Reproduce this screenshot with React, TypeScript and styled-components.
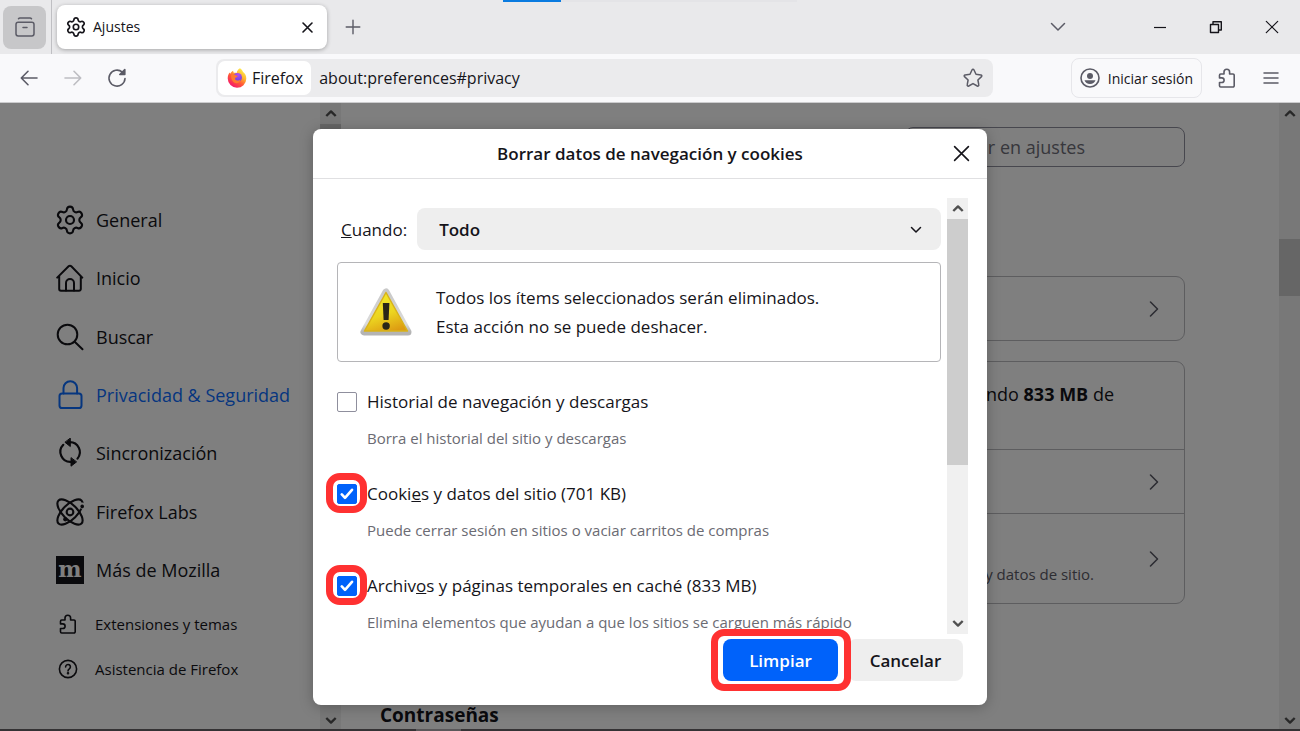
import React from "react";
import styled, { createGlobalStyle, css } from "styled-components";
import { Settings, Search } from "lucide-react";

const Global = createGlobalStyle`
  *, *::before, *::after { box-sizing: border-box; }
  body { margin: 0; font-family: "Open Sans", "Noto Sans", sans-serif; color: #15141a; }
  button, input, select { font: inherit; color: inherit; margin: 0; }
  button { border: 0; padding: 0; background: none; cursor: pointer; }
  a { color: inherit; text-decoration: none; }
  svg { display: block; flex: none; }
`;

const Window = styled.div`
  height: 100vh;
  display: flex;
  flex-direction: column;
  overflow: hidden;
  background: #fff;
`;

/* ---------- Tab strip ---------- */

const TabStrip = styled.header`
  position: relative;
  flex: none;
  height: 54px;
  display: flex;
  align-items: center;
  background: #e9e9eb;
  padding-left: 3px;
`;

const LoadingBar = styled.div`
  position: absolute;
  top: 0;
  left: 503px;
  width: 294px;
  height: 2px;
  background: linear-gradient(to right, #0a7be0 58px, #e4e4e7 58px);
`;

const ViewButton = styled.button`
  width: 43px;
  height: 43px;
  border-radius: 8px;
  background: #c7c7c9;
  color: #5b5b66;
  display: grid;
  place-items: center;
`;

const TabDivider = styled.span`
  width: 1px;
  align-self: stretch;
  margin: 0 5px;
  background: #bfbfc3;
`;

const Tab = styled.div`
  width: 270px;
  height: 44px;
  display: flex;
  align-items: center;
  gap: 7px;
  padding: 0 13px 0 9px;
  border-radius: 8px;
  background: #fff;
  box-shadow: 0 1px 4px rgba(0, 0, 0, 0.3);
  font-size: 14px;
  line-height: 20px;
`;

const TabTitle = styled.span`
  flex: 1;
`;

const IconButton = styled.button<{ $faded?: boolean }>`
  width: 44px;
  height: 44px;
  display: grid;
  place-items: center;
  flex: none;
  color: #5b5b66;
  ${(p) => p.$faded && css`color: #bdbdc2;`}
`;

const TabClose = styled.button`
  width: 14px;
  height: 20px;
  display: grid;
  place-items: center;
`;

const PlusSlot = styled.div`
  margin-left: 4px;
  flex: 1;
`;

const WindowControls = styled.div`
  display: flex;
  color: #15141a;
`;

const Control = styled.button<{ $muted?: boolean }>`
  width: 56px;
  height: 44px;
  display: grid;
  place-items: center;
  color: ${(p) => (p.$muted ? "#5b5b66" : "#15141a")};
`;

const ListAllSlot = styled.div`
  margin-right: 46px;
`;

/* ---------- Navigation bar ---------- */

const NavBar = styled.nav`
  flex: none;
  height: 49px;
  display: flex;
  align-items: center;
  background: #f9f9fb;
  border-bottom: 1px solid #ccccce;
  padding: 0 7px;
`;

const NavGroup = styled.div`
  display: flex;
  flex: none;
  width: 209px;
`;

const UrlBar = styled.div`
  flex: 1;
  height: 38px;
  display: flex;
  align-items: center;
  padding: 2px 10px 2px 2px;
  border-radius: 8px;
  background: #ebebed;
  font-size: 16px;
`;

const IdentityChip = styled.button`
  height: 34px;
  display: flex;
  align-items: center;
  gap: 5px;
  padding: 0 8px 0 9px;
  border-radius: 7px;
  background: #fff;
`;

const UrlInput = styled.input`
  flex: 1;
  min-width: 0;
  height: 34px;
  border: 0;
  padding: 0 8px;
  background: none;
  outline: none;
`;

const StarButton = styled.button`
  color: #5b5b66;
`;

const SignIn = styled.button`
  height: 40px;
  display: flex;
  align-items: center;
  gap: 8px;
  margin: 0 3px 0 78px;
  padding: 0 8px;
  border: 1px solid #e6e6ea;
  border-radius: 8px;
  font-size: 14px;
  white-space: nowrap;
`;

/* ---------- Settings page ---------- */

const Content = styled.div`
  position: relative;
  flex: 1;
  min-height: 0;
  display: flex;
  overflow: hidden;
`;

const Sidebar = styled.aside`
  width: 320px;
  flex: none;
  padding: 88px 0 0 56px;
`;

const MainNav = styled.nav`
  display: grid;
  grid-auto-rows: 1fr;
  height: 408px;
`;

const NavLink = styled.a<{ $active?: boolean }>`
  display: flex;
  align-items: center;
  gap: 12px;
  font-size: 18px;
  line-height: 28px;
  white-space: nowrap;
  color: ${(p) => (p.$active ? "#0c6cff" : "#15141a")};
`;

const SmallLink = styled.a`
  height: 45px;
  display: flex;
  align-items: center;
  gap: 15px;
  font-size: 15px;
  line-height: 20px;
`;

const SmallIcon = styled.span`
  width: 24px;
  display: grid;
  place-items: center;
`;

const MoreNav = styled.div`
  display: grid;
  padding-top: 2px;
`;

const Scrollbar = styled.div`
  width: 21px;
  flex: none;
  display: flex;
  flex-direction: column;
  background: #f0f0f0;
  color: #505050;
`;

const ScrollArrow = styled.span<{ $short?: boolean }>`
  height: ${(p) => (p.$short ? 17 : 21)}px;
  flex: none;
  display: grid;
  place-items: center;
`;

const ScrollThumb = styled.span<{ $top?: number; $size: number }>`
  height: ${(p) => p.$size}px;
  margin-top: ${(p) => p.$top ?? 0}px;
  background: #cdcdcd;
`;

const ScrollRest = styled.span`
  flex: 1;
`;

const Main = styled.main`
  flex: 1;
  min-width: 0;
  display: flex;
  flex-direction: column;
  padding: 24px 94px 0 39px;
`;

const SearchField = styled.label`
  align-self: flex-end;
  width: 280px;
  height: 40px;
  flex: none;
  display: flex;
  align-items: center;
  gap: 6px;
  padding: 0 8px;
  border: 1px solid #8f8f9d;
  border-radius: 8px;
  color: #5b5b66;
`;

const SearchInput = styled.input`
  width: 100%;
  min-width: 0;
  border: 0;
  padding: 0;
  background: none;
  font-size: 18px;
  outline: none;
  &::placeholder { color: #6e6e78; opacity: 1; }
`;

const Card = styled.section<{ $top: number }>`
  flex: none;
  margin-top: ${(p) => p.$top}px;
  border: 1px solid #bababe;
  border-radius: 9px;
`;

const CardRow = styled.div<{ $h: number; $pad?: number }>`
  min-height: ${(p) => p.$h}px;
  display: flex;
  justify-content: flex-end;
  align-items: center;
  padding-right: ${(p) => p.$pad ?? 24}px;
  & + & { border-top: 1px solid #bababe; }
`;

const RowArrow = styled.span`
  color: #5b5b66;
`;

const UsageText = styled.p`
  margin: 0 0 24px;
  font-size: 18px;
  line-height: 28px;
`;

const RowNote = styled.span`
  align-self: flex-end;
  margin: 0 54px 18px 0;
  font-size: 15px;
  line-height: 22px;
  color: #5b5b66;
`;

const SectionTitle = styled.h2`
  flex: none;
  margin: 97px 0 0;
  font-size: 19px;
  line-height: 28px;
  font-weight: 700;
`;

const Taskbar = styled.footer`
  flex: none;
  height: 2px;
  background: linear-gradient(to right, #343234 416px, #5a585a 416px, #5a585a 461px, #343234 461px);
`;

/* ---------- Dialog ---------- */

const Overlay = styled.div`
  position: absolute;
  inset: 0;
  display: flex;
  justify-content: center;
  align-items: flex-start;
  padding-top: 26px;
  background: rgba(0, 0, 0, 0.5);
`;

const Dialog = styled.div`
  width: 100%;
  max-width: 674px;
  border-radius: 8px;
  background: #fff;
  box-shadow: 0 2px 14px rgba(0, 0, 0, 0.25);
`;

const DialogHeader = styled.div`
  position: relative;
  height: 50px;
  display: flex;
  align-items: center;
  justify-content: center;
  border-bottom: 1px solid #e0e0e2;
`;

const DialogTitle = styled.h1`
  margin: 0;
  font-size: 17px;
  line-height: 26px;
  font-weight: 600;
`;

const DialogClose = styled.button`
  position: absolute;
  right: 16px;
  top: 14px;
  width: 20px;
  height: 20px;
  display: grid;
  place-items: center;
`;

const ScrollRegion = styled.div`
  height: 436px;
  margin: 19px 19px 0 0;
  display: flex;
  gap: 6px;
`;

const Form = styled.div`
  flex: 1;
  min-width: 0;
  overflow: hidden;
  padding: 10px 0 0 24px;
  font-size: 17px;
`;

const PeriodRow = styled.div`
  display: flex;
  align-items: center;
  gap: 10px;
  padding-left: 4px;
`;

const SelectWrap = styled.div`
  position: relative;
  flex: 1;
`;

const Select = styled.select`
  appearance: none;
  width: 100%;
  height: 42px;
  display: block;
  border: 0;
  border-radius: 8px;
  padding: 0 40px 0 22px;
  background: #eeeeee;
  font-weight: 600;
`;

const SelectChevron = styled.span`
  position: absolute;
  right: 19px;
  top: 18px;
  pointer-events: none;
`;

const Warning = styled.div`
  min-height: 100px;
  display: flex;
  align-items: center;
  gap: 24px;
  margin: 12px 0 25px;
  padding: 0 22px;
  border: 1px solid #b5b5b8;
  border-radius: 4px;
`;

const WarningText = styled.p`
  margin: 0;
  line-height: 29px;
`;

const Option = styled.div`
  height: 92px;
`;

const OptionLabel = styled.label`
  display: flex;
  align-items: center;
  gap: 10px;
  line-height: 30px;
  white-space: nowrap;
`;

const OptionText = styled.span`
  position: relative;
`;

const OptionNote = styled.p`
  margin: 6px 0 0 30px;
  font-size: 15px;
  line-height: 30px;
  color: #6b6b73;
  white-space: nowrap;
`;

const CheckWrap = styled.span<{ $ring?: boolean }>`
  position: relative;
  width: 20px;
  height: 20px;
  flex: none;
  ${(p) =>
    p.$ring &&
    css`
      &::before {
        content: "";
        position: absolute;
        inset: -11px -10px -9px -11px;
        border: 7px solid #ff3131;
        border-radius: 14px;
      }
    `}
`;

const Check = styled.input`
  appearance: none;
  position: relative;
  display: block;
  width: 20px;
  height: 20px;
  border: 1px solid #8f8f9d;
  border-radius: 2px;
  background: #fff;
  &:checked { background: #0062fa; border-color: #0062fa; }
`;

const CheckMark = styled.span`
  position: absolute;
  inset: 0;
  display: grid;
  place-items: center;
  pointer-events: none;
`;

const DialogFooter = styled.div`
  position: relative;
  display: flex;
  justify-content: flex-end;
  gap: 10px;
  padding: 5px 24px 24px;
`;

const ActionButton = styled.button<{ $primary?: boolean }>`
  width: 115px;
  height: 42px;
  border-radius: 8px;
  font-size: 17px;
  font-weight: 600;
  background: ${(p) => (p.$primary ? "#0062fa" : "#eeeeee")};
  color: ${(p) => (p.$primary ? "#fff" : "#15141a")};
`;

const Highlight = styled.div`
  position: relative;
  z-index: 1;
  &::before {
    content: "";
    position: absolute;
    inset: -10px -13px -10px -12px;
    z-index: -1;
    border: 7px solid #ff3131;
    border-radius: 13px;
    background: #fff;
  }
`;

/* ---------- Icons ---------- */

type StrokeProps = {
  w: number;
  h?: number;
  box: string;
  sw?: number;
  children: React.ReactNode;
};

const Stroke = ({ w, h, box, sw = 1.6, children }: StrokeProps) => (
  <svg
    width={w}
    height={h ?? w}
    viewBox={box}
    fill="none"
    stroke="currentColor"
    strokeWidth={sw}
    strokeLinecap="round"
    strokeLinejoin="round"
    aria-hidden="true"
  >
    {children}
  </svg>
);

const Cross = ({ size, sw }: { size: number; sw: number }) => (
  <Stroke w={size} box="0 0 16 16" sw={sw}>
    <path d="M1.5 1.5l13 13M14.5 1.5l-13 13" />
  </Stroke>
);

const Puzzle = ({ size, sw = 1.6 }: { size: number; sw?: number }) => (
  <Stroke w={size} box="0 0 20 20" sw={sw}>
    <path d="M3.7 6H7V4a2.8 2.8 0 0 1 5.6 0v2h3.4a1.2 1.2 0 0 1 1.2 1.2v10.6a1.2 1.2 0 0 1-1.2 1.2H3.7a1.2 1.2 0 0 1-1.2-1.2v-3.3h2.3a2.3 2.3 0 0 0 0-4.6H2.5V7.2A1.2 1.2 0 0 1 3.7 6z" />
  </Stroke>
);

const ChevronRight = () => (
  <RowArrow>
    <Stroke w={12} h={18} box="0 0 12 18" sw={1.6}>
      <path d="M2.5 2l7 7-7 7" />
    </Stroke>
  </RowArrow>
);

const ArrowUp = () => (
  <Stroke w={12} h={9} box="0 0 12 9" sw={2.4}>
    <path d="M1.3 7L6 2.4 10.7 7" strokeLinecap="butt" />
  </Stroke>
);

const ArrowDown = () => (
  <Stroke w={12} h={9} box="0 0 12 9" sw={2.4}>
    <path d="M1.3 2L6 6.6 10.7 2" strokeLinecap="butt" />
  </Stroke>
);

const HomeIcon = () => (
  <Stroke w={28} box="0 0 28 28" sw={2}>
    <path d="M1.2 13.6L12.6 2.2a1.9 1.9 0 0 1 2.7 0l11 11.4M3.2 12v13a1.8 1.8 0 0 0 1.8 1.8h18a1.8 1.8 0 0 0 1.8-1.8V12" />
    <path d="M10 26.5V19a4 4 0 0 1 8 0v7.5" />
  </Stroke>
);

const SearchIcon = () => (
  <Stroke w={28} box="0 0 28 28" sw={2}>
    <circle cx="11.5" cy="11.5" r="9.8" />
    <path d="M18.7 18.7l7.8 7.6" />
  </Stroke>
);

const LockIcon = () => (
  <Stroke w={28} h={30} box="0 0 28 30" sw={2}>
    <path d="M7.5 13.5V8a6.8 6.8 0 0 1 13.6 0v5.5" />
    <rect x="3.5" y="13.5" width="22" height="14.5" rx="2.6" />
  </Stroke>
);

const SyncIcon = () => (
  <Stroke w={28} h={30} box="0 0 28 30" sw={2.2}>
    <path d="M15 23.8A10 10 0 0 1 7.3 6.8" />
    <path d="M13.5 4.2a10 10 0 0 1 8 16.4" />
    <path d="M14.3 .5v8L9.2 4.5z" fill="currentColor" strokeWidth="1" />
    <path d="M15 20v8.2l5.3-4.1z" fill="currentColor" strokeWidth="1" />
  </Stroke>
);

const LabsIcon = () => (
  <Stroke w={28} box="2 2 20 20" sw={1.5}>
    <path d="M20.2 20.2c2.04-2.03.02-7.36-4.5-11.9-4.54-4.52-9.87-6.54-11.9-4.5-2.04 2.03-.02 7.36 4.5 11.9 4.54 4.52 9.87 6.54 11.9 4.5Z" />
    <path d="M15.7 15.7c4.52-4.54 6.54-9.87 4.5-11.9-2.03-2.04-7.36-.02-11.9 4.5-4.52 4.54-6.54 9.87-4.5 11.9 2.03 2.04 7.36.02 11.9-4.5Z" />
    <circle cx="12" cy="12" r="2.4" />
    <circle cx="20.7" cy="7.4" r="2.2" fill="#fff" stroke="none" />
    <circle cx="20.7" cy="8" r=".9" fill="currentColor" strokeWidth=".8" />
    <circle cx="8.6" cy="17.2" r="1.1" fill="currentColor" strokeWidth=".8" />
  </Stroke>
);

const MozillaIcon = () => (
  <svg width="28" height="28" viewBox="0 0 28 28" aria-hidden="true">
    <rect width="28" height="28" fill="#15141a" />
    <text x="14" y="21" textAnchor="middle" fontFamily="DejaVu Serif, serif" fontWeight="700" fontSize="22" fill="#fff">
      m
    </text>
  </svg>
);

const HelpIcon = () => (
  <Stroke w={20} box="0 0 20 20" sw={1.6}>
    <circle cx="10" cy="10" r="8.6" />
    <path d="M7.6 7.9a2.4 2.4 0 1 1 3.7 2c-.9.6-1.3 1-1.3 2" />
    <circle cx="10" cy="14.3" r=".5" fill="currentColor" />
  </Stroke>
);

const FirefoxLogo = () => (
  <svg width="20" height="20" viewBox="0 0 20 20" aria-hidden="true">
    <defs>
      <linearGradient id="fxBody" x1="0.85" y1="0.05" x2="0.2" y2="0.95">
        <stop offset="0" stopColor="#fff44f" />
        <stop offset="0.35" stopColor="#ffb02e" />
        <stop offset="0.6" stopColor="#ff5b36" />
        <stop offset="1" stopColor="#f4126f" />
      </linearGradient>
      <radialGradient id="fxGlobe" cx="0.6" cy="0.2" r="0.9">
        <stop offset="0" stopColor="#b04cf5" />
        <stop offset="1" stopColor="#5b3fd6" />
      </radialGradient>
    </defs>
    <path
      d="M13 .3c2 1.3 2.6 2.6 3.1 3.8 2 1.3 3.3 3.8 3.2 6.6A9.3 9.3 0 0 1 10 19.8 9.4 9.4 0 0 1 .7 10.6c0-2.5.6-4.4 2-6.1l.6 1.2C3.9 4.4 4.9 3.3 6.2 2.7c-.1.9.2 1.6.7 2.1 1-.2 2-.1 2.8.2C9.8 3.2 11.3 1.2 13 .3z"
      fill="url(#fxBody)"
    />
    <circle cx="10.4" cy="9.6" r="4.6" fill="url(#fxGlobe)" />
    <path d="M4 7.2c1.6-1.2 3.2-1 4.4-.3 1 .6 1.500.9 2.500.9-.4 1.300-1.600 1.500-2.400 2-.8.500-.5 1.900.8 2.500 1.500.700 3.500.2 4.400-1.100-.3 2.900-2.400 4.200-4.600 4.100C6.300 15.100 4 11.600 4 7.200z" fill="#ff7a2f" />
  </svg>
);

const WarningIcon = () => (
  <svg width="52" height="48" viewBox="0 0 52 48" aria-hidden="true">
    <defs>
      <linearGradient id="warnFill" x1="0.3" y1="0" x2="0.7" y2="1">
        <stop offset="0" stopColor="#f3ea2a" />
        <stop offset="0.55" stopColor="#ecd520" />
        <stop offset="1" stopColor="#dd9b12" />
      </linearGradient>
      <linearGradient id="warnRim" x1="0" y1="0" x2="0" y2="1">
        <stop offset="0" stopColor="#c9c9c9" />
        <stop offset="0.8" stopColor="#dcdcdc" />
        <stop offset="1" stopColor="#b4b4b4" />
      </linearGradient>
    </defs>
    <path d="M26 4L4 44h44z" fill="url(#warnRim)" stroke="url(#warnRim)" strokeWidth="7" strokeLinejoin="round" />
    <path d="M26 4.5L4.5 43h43z" fill="url(#warnFill)" stroke="#d8b21a" strokeWidth="1.5" strokeLinejoin="round" />
    <path d="M22.8 15h6.6l-.8 17h-5z" fill="#2a2618" />
    <circle cx="26.1" cy="38" r="3.7" fill="#2a2618" />
  </svg>
);

/* ---------- Data ---------- */

const sections = [
  { label: "General", icon: <Settings width={28} height={30} viewBox="1.5 1 21 22" strokeWidth={1.6} /> },
  { label: "Inicio", icon: <HomeIcon /> },
  { label: "Buscar", icon: <SearchIcon /> },
  { label: "Privacidad & Seguridad", icon: <LockIcon />, active: true },
  { label: "Sincronización", icon: <SyncIcon /> },
  { label: "Firefox Labs", icon: <LabsIcon /> },
  { label: "Más de Mozilla", icon: <MozillaIcon /> },
];

const options = [
  {
    id: "history",
    label: <>Historial de nave<u>g</u>ación y descargas</>,
    note: "Borra el historial del sitio y descargas",
    checked: false,
  },
  {
    id: "cookies",
    label: <>Cooki<u>e</u>s y datos del sitio (701 KB)</>,
    note: "Puede cerrar sesión en sitios o vaciar carritos de compras",
    checked: true,
  },
  {
    id: "cache",
    label: <>Archiv<u>o</u>s y páginas temporales en caché (833 MB)</>,
    note: "Elimina elementos que ayudan a que los sitios se carguen más rápido",
    checked: true,
  },
];

export default function App() {
  return (
    <Window>
      <Global />
      <TabStrip>
        <LoadingBar />
        <ViewButton aria-label="Firefox View">
          <Stroke w={20} box="0 0 20 20" sw={1.5}>
            <rect x="1" y="5.2" width="18" height="13.8" rx="2.2" />
            <path d="M3.5 1.7c.4-.5.8-.7 1.4-.7h10.2c.6 0 1 .2 1.4.7M8 10.6h4" />
          </Stroke>
        </ViewButton>
        <TabDivider />
        <Tab>
          <Settings width={20} height={20} viewBox="1 1 22 22" strokeWidth={1.8} />
          <TabTitle>Ajustes</TabTitle>
          <TabClose aria-label="Cerrar pestaña">
            <Cross size={11} sw={2.4} />
          </TabClose>
        </Tab>
        <PlusSlot>
          <IconButton aria-label="Nueva pestaña">
            <Stroke w={16} box="0 0 16 16" sw={1.4}>
              <path d="M8 1.2v13.6M1.2 8h13.6" />
            </Stroke>
          </IconButton>
        </PlusSlot>
        <WindowControls>
          <ListAllSlot>
            <Control $muted aria-label="Listar pestañas">
              <Stroke w={16} h={10} box="0 0 16 10" sw={1.5}>
                <path d="M1.5 1.5L8 8l6.5-6.5" />
              </Stroke>
            </Control>
          </ListAllSlot>
          <Control aria-label="Minimizar">
            <Stroke w={12} box="0 0 12 12" sw={1.2}>
              <path d="M0 6.5h12" strokeLinecap="butt" />
            </Stroke>
          </Control>
          <Control aria-label="Restaurar">
            <Stroke w={14} box="0 0 14 14" sw={1.4}>
              <path d="M1.5 4.5h8v8h-8z" />
              <path d="M4 4V1.7h8.300V10H10" />
            </Stroke>
          </Control>
          <Control aria-label="Cerrar">
            <Cross size={14} sw={1.4} />
          </Control>
        </WindowControls>
      </TabStrip>

      <NavBar>
        <NavGroup>
          <IconButton aria-label="Atrás">
            <Stroke w={18} box="0 0 18 18">
              <path d="M17 9H1.5M8 2.3L1.3 9 8 15.7" />
            </Stroke>
          </IconButton>
          <IconButton $faded aria-label="Adelante">
            <Stroke w={18} box="0 0 18 18">
              <path d="M1 9h15.5M10 2.3L16.7 9 10 15.7" />
            </Stroke>
          </IconButton>
          <IconButton aria-label="Recargar">
            <Stroke w={20} box="0 0 20 20">
              <path d="M18 10.5a8 8 0 1 1-2.7-6.4" />
              <path d="M17.8 1.5v5h-5z" fill="currentColor" />
            </Stroke>
          </IconButton>
        </NavGroup>
        <UrlBar>
          <IdentityChip>
            <FirefoxLogo />
            Firefox
          </IdentityChip>
          <UrlInput aria-label="Dirección" defaultValue="about:preferences#privacy" />
          <StarButton aria-label="Agregar a marcadores">
            <Stroke w={20} box="0 0 20 20" sw={1.5}>
              <path d="M10 1.2c.4 0 .7.2.9.6l2.1 4.5 4.9.6c.9.1 1.2 1.1.6 1.7l-3.6 3.4.9 4.9c.2.9-.7 1.5-1.5 1.1L10 15.600 5.700 18c-.8.400-1.700-.2-1.500-1.100l.9-4.900L1.500 8.600c-.6-.6-.3-1.600.6-1.700L7 6.300l2.100-4.500c.2-.4.5-.6.9-.6z" />
            </Stroke>
          </StarButton>
        </UrlBar>
        <SignIn>
          <svg width="20" height="20" viewBox="0 0 20 20" aria-hidden="true">
            <circle cx="10" cy="10" r="9" fill="none" stroke="#5b5b66" strokeWidth="1.6" />
            <circle cx="10" cy="8" r="3" fill="#5b5b66" />
            <path d="M4.500 12.300h11c-.7 2.400-2.900 3.700-5.500 3.700s-4.800-1.300-5.500-3.700z" fill="#5b5b66" />
          </svg>
          Iniciar sesión
        </SignIn>
        <IconButton aria-label="Extensiones">
          <Puzzle size={20} />
        </IconButton>
        <IconButton aria-label="Menú">
          <Stroke w={16} box="0 0 16 16" sw={1.5}>
            <path d="M1 3h14M1 8h14M1 13h14" />
          </Stroke>
        </IconButton>
      </NavBar>

      <Content>
        <Sidebar>
          <MainNav>
            {sections.map((s) => (
              <NavLink key={s.label} href="#" $active={s.active}>
                {s.icon}
                {s.label}
              </NavLink>
            ))}
          </MainNav>
          <MoreNav>
            <SmallLink href="#">
              <SmallIcon><Puzzle size={20} /></SmallIcon>
              Extensiones y temas
            </SmallLink>
            <SmallLink href="#">
              <SmallIcon><HelpIcon /></SmallIcon>
              Asistencia de Firefox
            </SmallLink>
          </MoreNav>
        </Sidebar>
        <Scrollbar>
          <ScrollArrow><ArrowUp /></ScrollArrow>
          <ScrollThumb $size={560} />
          <ScrollRest />
          <ScrollArrow $short><ArrowDown /></ScrollArrow>
        </Scrollbar>
        <Main>
          <SearchField>
            <Search size={18} strokeWidth={1.6} />
            <SearchInput type="search" placeholder="Buscar en ajustes" aria-label="Buscar en ajustes" />
          </SearchField>
          <Card $top={109}>
            <CardRow $h={63}><ChevronRight /></CardRow>
          </Card>
          <Card $top={20}>
            <CardRow $h={87} $pad={70}>
              <UsageText>usando <b>833 MB</b> de</UsageText>
            </CardRow>
            <CardRow $h={64}><ChevronRight /></CardRow>
            <CardRow $h={90}>
              <RowNote>cookies y datos de sitio.</RowNote>
              <ChevronRight />
            </CardRow>
          </Card>
          <SectionTitle>Contraseñas</SectionTitle>
        </Main>
        <Scrollbar>
          <ScrollArrow><ArrowUp /></ScrollArrow>
          <ScrollThumb $size={57} $top={115} />
          <ScrollRest />
          <ScrollArrow $short><ArrowDown /></ScrollArrow>
        </Scrollbar>

        <Overlay>
          <Dialog role="dialog" aria-modal="true" aria-labelledby="dialog-title">
            <DialogHeader>
              <DialogTitle id="dialog-title">Borrar datos de navegación y cookies</DialogTitle>
              <DialogClose aria-label="Cerrar"><Cross size={17} sw={1.5} /></DialogClose>
            </DialogHeader>
            <ScrollRegion>
              <Form>
                <PeriodRow>
                  <label htmlFor="period"><u>C</u>uando:</label>
                  <SelectWrap>
                    <Select id="period" defaultValue="all">
                      <option value="all">Todo</option>
                    </Select>
                    <SelectChevron>
                      <Stroke w={12} h={8} box="0 0 12 8" sw={1.5}>
                        <path d="M1.5 1.5L6 6l4.500-4.500" />
                      </Stroke>
                    </SelectChevron>
                  </SelectWrap>
                </PeriodRow>
                <Warning>
                  <WarningIcon />
                  <WarningText>
                    Todos los ítems seleccionados serán eliminados.
                    <br />
                    Esta acción no se puede deshacer.
                  </WarningText>
                </Warning>
                {options.map((o) => (
                  <Option key={o.id}>
                    <OptionLabel htmlFor={o.id}>
                      <CheckWrap $ring={o.checked}>
                        <Check type="checkbox" id={o.id} defaultChecked={o.checked} />
                        {o.checked && (
                          <CheckMark>
                            <svg width="14" height="12" viewBox="0 0 14 12" fill="none" stroke="#fff" strokeWidth="2.6" strokeLinecap="round" strokeLinejoin="round" aria-hidden="true">
                              <path d="M1.8 6.4L5 9.8l7-8" />
                            </svg>
                          </CheckMark>
                        )}
                      </CheckWrap>
                      <OptionText>{o.label}</OptionText>
                    </OptionLabel>
                    <OptionNote>{o.note}</OptionNote>
                  </Option>
                ))}
              </Form>
              <Scrollbar>
                <ScrollArrow><ArrowUp /></ScrollArrow>
                <ScrollThumb $size={246} />
                <ScrollRest />
                <ScrollArrow><ArrowDown /></ScrollArrow>
              </Scrollbar>
            </ScrollRegion>
            <DialogFooter>
              <Highlight>
                <ActionButton $primary>Limpiar</ActionButton>
              </Highlight>
              <ActionButton>Cancelar</ActionButton>
            </DialogFooter>
          </Dialog>
        </Overlay>
      </Content>
      <Taskbar />
    </Window>
  );
}
